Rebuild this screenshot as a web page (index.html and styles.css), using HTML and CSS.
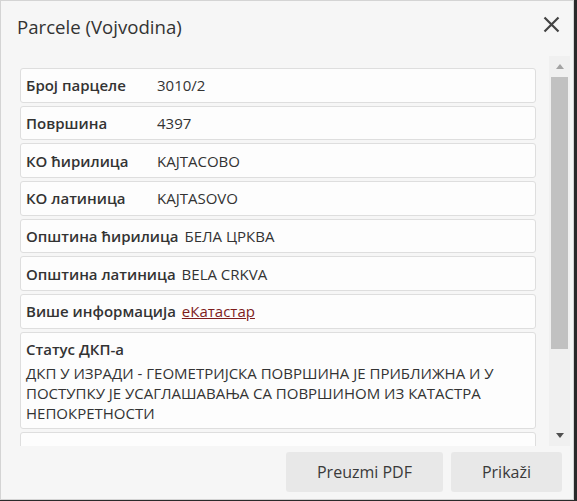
FILE: index.html
```html
<!DOCTYPE html>
<html lang="sr">
<head>
<meta charset="utf-8">
<title>Parcele (Vojvodina)</title>
<link rel="stylesheet" href="styles.css">
</head>
<body>
<div class="dialog">
  <header class="head">
    <h1 class="title">Parcele (Vojvodina)</h1>
    <button class="close" aria-label="Zatvori">
      <svg width="17" height="17" viewBox="0 0 17 17"><path d="M1.5 1.5 L15.5 15.5 M15.5 1.5 L1.5 15.5" stroke="#444" stroke-width="2.2" fill="none"/></svg>
    </button>
  </header>
  <div class="body">
    <div class="list">
      <div class="row"><span class="label">Број парцеле</span><span class="value">3010/2</span></div>
      <div class="row"><span class="label">Површина</span><span class="value">4397</span></div>
      <div class="row"><span class="label">КО ћирилица</span><span class="value">KAJTACOBO</span></div>
      <div class="row"><span class="label">КО латиница</span><span class="value">KAJTASOVO</span></div>
      <div class="row"><span class="label">Општина ћирилица</span><span class="value">БЕЛА ЦРКВА</span></div>
      <div class="row"><span class="label">Општина латиница</span><span class="value">BELA CRKVA</span></div>
      <div class="row"><span class="label">Више информација</span><span class="value"><a class="link" href="#">еКатастар</a></span></div>
      <div class="row stack"><span class="label">Статус ДКП-а</span><span class="value">ДКП У ИЗРАДИ - ГЕОМЕТРИЈСКА ПОВРШИНА ЈЕ ПРИБЛИЖНА И У ПОСТУПКУ ЈЕ УСАГЛАШАВАЊА СА ПОВРШИНОМ ИЗ КАТАСТРА НЕПОКРЕТНОСТИ</span></div>
      <div class="row"><span class="label">Ажурирано</span><span class="value">10.10.2018. 08:00</span></div>
    </div>
    <div class="scrollbar">
      <div class="sb-btn"><span class="tri up"></span></div>
      <div class="sb-track"><div class="thumb"></div></div>
      <div class="sb-btn"><span class="tri down"></span></div>
    </div>
  </div>
  <footer class="foot">
    <button class="btn">Preuzmi PDF</button>
    <button class="btn">Prikaži</button>
  </footer>
</div>
</body>
</html>
```

FILE: styles.css
```css
* { box-sizing: border-box; }
html, body { margin: 0; padding: 0; }
body {
  background: #2a2a2a;
  font-family: "Open Sans", "Noto Sans", sans-serif;
  color: #333;
  width: 577px;
  height: 501px;
  overflow: hidden;
}
.dialog {
  width: 574px;
  height: 500px;
  background: #f6f6f6;
  border: 1px solid #d4d4d4;
  display: flex;
  flex-direction: column;
}
.head {
  height: 55px;
  flex: none;
  display: flex;
  align-items: center;
  justify-content: space-between;
  padding: 0 13px 3px 16px;
}
.title {
  margin: 0;
  font-size: 18.62px;
  font-weight: 400;
  color: #333;
  line-height: 26px;
}
.close {
  border: 0;
  background: none;
  padding: 0;
  width: 17px;
  height: 17px;
  display: block;
  margin-bottom: 5px;
}
.close svg { display: block; }
.body {
  height: 390px;
  flex: none;
  display: flex;
}
.list {
  flex: 1;
  overflow: hidden;
  padding: 12px 13px 0 19px;
}
.row {
  display: flex;
  background: #fdfdfd;
  border: 1px solid #dedede;
  border-radius: 3px;
  padding: 6.35px 6px 6.35px 5px;
  margin-bottom: 3px;
  font-size: 15px;
  line-height: 20px;
}
.label {
  font-weight: 600;
  min-width: 125px;
  margin-right: 6px;
  flex: none;
}
.value { color: #333; }
.row.stack {
  flex-direction: column;
  padding-bottom: 5px;
}
.row.stack .value { margin-top: 4px; }
.link { color: #7e1c1c; text-decoration: underline; }
.scrollbar {
  width: 21px;
  margin-right: 3px;
  background: #f0f0f0;
  display: flex;
  flex-direction: column;
  flex: none;
}
.sb-btn {
  height: 21px;
  flex: none;
  display: flex;
  align-items: center;
  justify-content: center;
}
.tri { width: 0; height: 0; border-left: 4.5px solid transparent; border-right: 4.5px solid transparent; }
.tri.up { border-bottom: 5px solid #a3a3a3; }
.tri.down { border-top: 5px solid #505050; }
.sb-track { flex: 1; padding: 0 2px; }
.thumb { height: 272px; background: #c1c1c1; }
.foot {
  flex: 1;
  display: flex;
  justify-content: flex-end;
  align-items: flex-start;
  gap: 8px;
  padding: 6px 11px 0 0;
}
.btn {
  height: 40px;
  border: 0;
  border-radius: 3px;
  background: #e8e8e8;
  color: #3a3a3a;
  font-family: "Open Sans", "Noto Sans", sans-serif;
  font-size: 16px;
  padding: 0 31px;
}
```
